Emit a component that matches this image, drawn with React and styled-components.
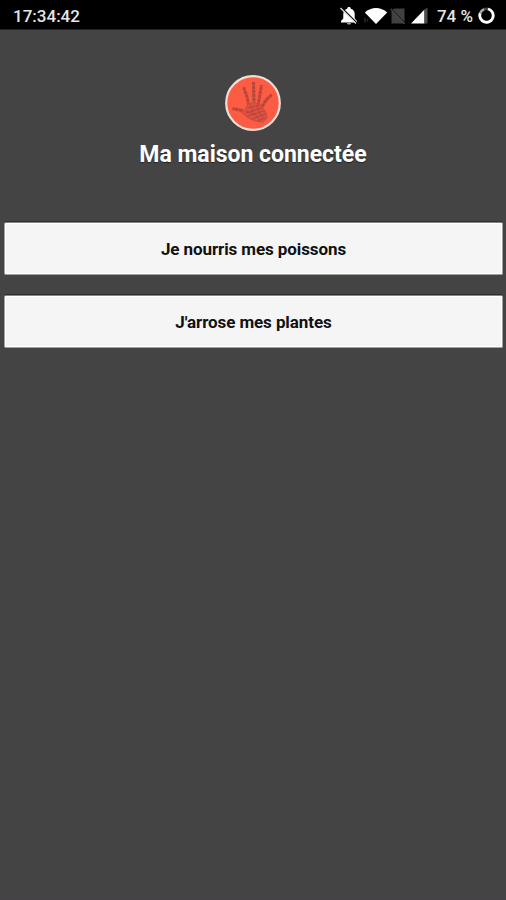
import React from "react";
import styled, { createGlobalStyle } from "styled-components";

const GlobalStyle = createGlobalStyle`
  * { box-sizing: border-box; }
  body { margin: 0; background: #444444; font-family: Roboto, sans-serif; }
`;

const Screen = styled.div`
  display: flex;
  flex-direction: column;
  height: 900px;
  background: #444444;
  border-bottom: 1px solid #4b4049;
  overflow: hidden;
`;

const StatusBar = styled.div`
  display: flex;
  align-items: center;
  justify-content: space-between;
  height: 30px;
  padding: 2px 11px 0 13px;
  background: #000;
  border-bottom: 1px solid #222;
  color: #e6e6e6;
`;

const StatusText = styled.span`
  font-size: 17px;
  font-weight: 500;
  line-height: 28px;
  white-space: nowrap;
  letter-spacing: ${(p) => p.$spacing || "0"};
`;

const StatusIcons = styled.div`
  display: flex;
  align-items: center;
`;

const Glyph = styled.svg`
  display: block;
  flex: none;
  margin-right: ${(p) => p.$gap || 0}px;
`;

const Header = styled.header`
  display: flex;
  flex-direction: column;
  align-items: center;
  padding-top: 44px;
`;

const Title = styled.h1`
  margin: 8px 0 0;
  font-size: 23px;
  font-weight: 700;
  line-height: 30px;
  color: #fff;
  white-space: nowrap;
  letter-spacing: -0.02px;
  text-shadow: 0 1px 1px #222;
`;

const Actions = styled.main`
  display: flex;
  flex-direction: column;
  gap: 20px;
  padding: 52px 3px 0 4px;
`;

const ActionButton = styled.button`
  height: 53px;
  padding: 1px 0 0;
  border: 1px solid #a0a0a0;
  border-top-color: #858585;
  border-radius: 2px;
  background: #f5f5f5;
  box-shadow: inset 0 0 0 1px #fff, 0 -1px 0 #302e2e;
  color: #111;
  font-family: Roboto, sans-serif;
  font-size: 17px;
  font-weight: 700;
  letter-spacing: -0.09px;
`;

const BellOff = () => (
  <Glyph width="20" height="20" viewBox="0 0 20 20" $gap={5}>
    <path d="M10 1c1.100 0 1.700.7 1.800 1.700 2.700.7 3.900 2.800 3.900 5.300v4.500l2.300 2.500v1.500H2V15l2.300-2.500V8c0-2.500 1.200-4.600 3.900-5.300C8.300 1.700 8.900 1 10 1z" fill="#fff" />
    <path d="M8 17h4c-.2 1-.9 1.500-2 1.500S8.200 18 8 17z" fill="#aaa" />
    <path d="M3 2 18 17" stroke="#000" strokeWidth="1.300" />
    <path d="M1.500 2 17 17.500" stroke="#ddd" strokeWidth="1.200" />
  </Glyph>
);

const Wifi = () => (
  <Glyph width="24" height="18" viewBox="0 0 24 18" $gap={2}>
    <path d="M.8 5.600C7-.5 17-.5 23.200 5.600L12 17z" fill="#fff" />
    <path d="M1 11v4.500M3.500 12.500v2" stroke="#333" strokeWidth="1.300" />
  </Glyph>
);

const NoSim = () => (
  <Glyph width="16" height="18" viewBox="0 0 16 18" $gap={5}>
    <path d="M4 1.500h10.500v15H1.500V4z" fill="#414141" />
    <path d="M1 1.500 15 16.500" stroke="#222" strokeWidth="1.600" />
    <path d="M.5 2 14.500 17" stroke="#555" strokeWidth="1" />
  </Glyph>
);

const Signal = () => (
  <Glyph width="18" height="18" viewBox="0 0 18 18" $gap={8}>
    <path d="M13.500 2.500v14H0z" fill="#fff" />
    <path d="M13.500 2.500l3-2v16h-3z" fill="#4d4d4d" />
  </Glyph>
);

const BatteryRing = () => (
  <Glyph width="17" height="18" viewBox="0 0 17 18">
    <circle cx="8.500" cy="8.500" r="6.700" fill="none" stroke="#484848" strokeWidth="2.600" />
    <path d="M10 2A6.700 6.700 0 1 1 2.200 6.200" fill="none" stroke="#fff" strokeWidth="2.800" />
    <path d="M2.200 6.200A6.700 6.700 0 0 1 6 2.300" fill="none" stroke="#aaa" strokeWidth="2.400" />
  </Glyph>
);

const HandLogo = () => (
  <Glyph width="58" height="58" viewBox="0 0 58 58">
    <circle cx="29" cy="29" r="26.800" fill="#fb5c43" stroke="#f1dfd7" strokeWidth="2.200" />
    <g fill="none" stroke="#b6463a" strokeLinecap="round" strokeLinejoin="round">
      <g strokeWidth="3" strokeDasharray="3.500 .5" strokeLinecap="butt">
        <path d="M25 32 23 23 19.500 13" />
        <path d="M30 31 29.500 8" />
        <path d="M34 32 37.500 11" />
        <path d="M36 36 42 26 48 20.500" />
        <path d="M25 41 18 36.500 8.500 34.500" />
      </g>
      <path d="M24 30c4-2 9-2 13 2l5 6 1 6-4 4c-6 0-12-2-16-5l-6-5 4-2z" fill="#df5141" stroke="#d04b3d" strokeWidth="1" />
      <path d="M24 34l12-3M22 39l16-5M24 42l16-5M28 45l13-5M34 47l7-3M26 31l4 8 6 7M33 31l2 7 5 7M22 37l9 4" strokeWidth="1" />
    </g>
  </Glyph>
);

export default function App() {
  return (
    <>
      <GlobalStyle />
      <Screen>
        <StatusBar>
          <StatusText>17:34:42</StatusText>
          <StatusIcons>
            <BellOff />
            <Wifi />
            <NoSim />
            <Signal />
            <StatusText>74 %</StatusText>
            <Glyph width="5" height="18" />
            <BatteryRing />
          </StatusIcons>
        </StatusBar>
        <Header>
          <HandLogo />
          <Title>Ma maison connectée</Title>
        </Header>
        <Actions>
          <ActionButton>Je nourris mes poissons</ActionButton>
          <ActionButton>J'arrose mes plantes</ActionButton>
        </Actions>
      </Screen>
    </>
  );
}
